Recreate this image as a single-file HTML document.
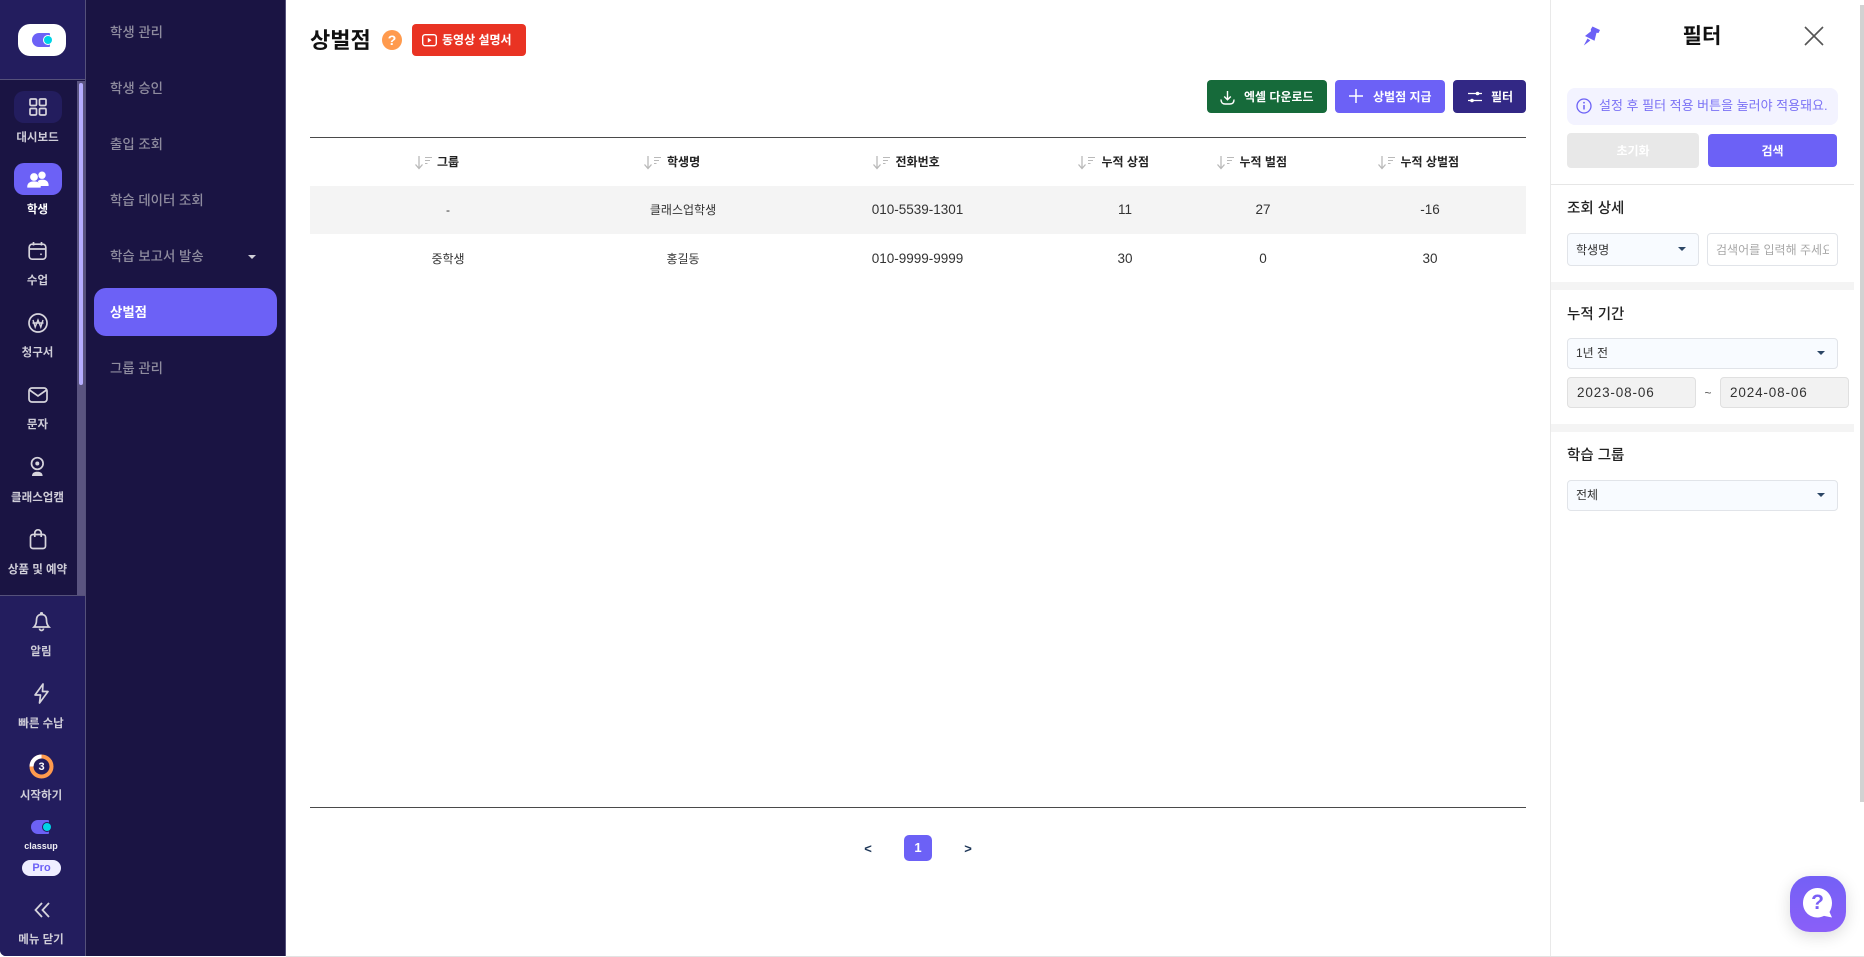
<!DOCTYPE html>
<html lang="ko"><head><meta charset="utf-8"><title>상벌점</title>
<style>
*{box-sizing:border-box;margin:0;padding:0}
html,body{width:1864px;height:957px;overflow:hidden;background:#fff;font-family:"Liberation Sans","Noto Sans CJK KR",sans-serif;color:#222}
.a{position:absolute}
.t{position:absolute;white-space:nowrap;line-height:20px;height:20px}
.c{position:absolute;white-space:nowrap;line-height:20px;height:20px;text-align:center;transform:translateX(-50%)}
.lb{font-size:11.5px;font-weight:700;color:#cfcdd8}
.nv{font-size:13.4px;font-weight:500;color:#8f8c9f;left:110px}
.th{font-size:12px;font-weight:700;color:#222}
.td{font-size:12px;color:#333}
.num{font-size:13.5px;color:#333}
.btn{position:absolute;border-radius:4px}
.h{font-size:14.5px;font-weight:500;color:#222;left:1567px}
.sel{position:absolute;background:#f8fbff;border:1px solid #e1e4e9;border-radius:4px}
.car{position:absolute;width:0;height:0;border-left:4.5px solid transparent;border-right:4.5px solid transparent;border-top:4.5px solid #2c4766}
.date{position:absolute;background:#f2f2f2;border:1px solid #e0e0e0;border-radius:4px;width:129px;height:31px;font-size:13.5px;line-height:29px;padding-left:9px;color:#333;letter-spacing:.85px}
svg{position:absolute;overflow:visible}
</style></head><body>

<!-- rails -->
<div class="a" style="left:0;top:0;width:86px;height:956px;background:#1a1443;border-bottom-left-radius:6px"></div>
<div class="a" style="left:0;top:0;width:86px;height:80px;background:#231d5e;border-bottom:1px solid #55517a"></div>
<div class="a" style="left:0;top:595px;width:86px;height:361px;background:#231d5e;border-top:1px solid #55517a;border-bottom-left-radius:6px"></div>
<div class="a" style="left:85px;top:0;width:1px;height:956px;background:#55517a"></div>
<div class="a" style="left:86px;top:0;width:199px;height:956px;background:#1a1443"></div>
<div class="a" style="left:285px;top:0;width:1px;height:956px;background:#55517a"></div>
<div class="a" style="left:77px;top:81px;width:8px;height:514px;background:#5a5480"></div>
<div class="a" style="left:79px;top:83px;width:4px;height:302px;background:#b6aeff;border-radius:2px"></div>

<!-- logo -->
<div class="a" style="left:18px;top:24px;width:48px;height:32px;background:#fff;border-radius:12px"></div>
<div class="a" style="left:32px;top:33px;width:18px;height:14px;background:#6c61f6;border-radius:7px 1px 1px 7px"></div>
<div class="a" style="left:44px;top:36px;width:8px;height:8px;background:#00d3e6;border-radius:50%;box-shadow:0 0 0 1px #fff"></div>

<!-- dashboard -->
<div class="a" style="left:14px;top:91px;width:48px;height:32px;background:#231d5e;border-radius:10px"></div>
<svg style="left:29px;top:98px" width="18" height="18" fill="none" stroke="#d6d4dc" stroke-width="1.7"><rect x="1" y="1" width="6.5" height="6.5" rx="1.2"/><rect x="10.5" y="1" width="6.5" height="6.5" rx="1.2"/><rect x="1" y="10.5" width="6.5" height="6.5" rx="1.2"/><rect x="10.5" y="10.5" width="6.5" height="6.5" rx="1.2"/></svg>
<div class="c lb" style="left:37.5px;top:128px">대시보드</div>

<!-- student -->
<div class="a" style="left:14px;top:163px;width:48px;height:32px;background:#6c61f6;border-radius:10px"></div>
<svg style="left:27px;top:171px" width="22" height="17" fill="#fff"><circle cx="15" cy="4.2" r="3.7"/><path d="M10 15h11.6c.4-3.4-1.6-6.4-6.2-6.4-2 0-3.6.6-4.6 1.6 1 1.2 1.2 3 .8 4.8z" /><circle cx="7" cy="6" r="4.2" stroke="#6c61f6" stroke-width=".6"/><path d="M.3 16.6c-.5-3.8 2-6.2 6.7-6.2s7.2 2.4 6.7 6.2z"/></svg>
<div class="c lb" style="left:37.5px;top:200px;color:#fff">학생</div>

<!-- class -->
<svg style="left:28px;top:241px" width="19" height="20" fill="none" stroke="#d6d4dc" stroke-width="1.7"><rect x="1.2" y="3.2" width="16.6" height="15" rx="3"/><path d="M1.2 8h16.6M5.5 1v3.5M13.5 1v3.5"/><circle cx="13" cy="13.3" r=".9" fill="#d6d4dc" stroke="none"/></svg>
<div class="c lb" style="left:37.5px;top:271px">수업</div>

<!-- invoice -->
<svg style="left:28px;top:313px" width="20" height="20" fill="none" stroke="#d6d4dc" stroke-width="1.7"><circle cx="10" cy="10" r="9"/><path d="M5 7l2.2 7 2.8-7 2.8 7L15 7M4.5 10h11" stroke-width="1.4"/></svg>
<div class="c lb" style="left:37.5px;top:343px">청구서</div>

<!-- message -->
<svg style="left:28px;top:387px" width="20" height="16" fill="none" stroke="#d6d4dc" stroke-width="1.7"><rect x="1" y="1" width="18" height="14" rx="3"/><path d="M1.5 3l8.5 6 8.5-6"/></svg>
<div class="c lb" style="left:37.5px;top:415px">문자</div>

<!-- cam -->
<svg style="left:30px;top:457px" width="15" height="20" fill="none" stroke="#d6d4dc" stroke-width="1.7"><circle cx="7.3" cy="6.5" r="5.8"/><circle cx="7.3" cy="6.5" r="2" fill="#d6d4dc" stroke="none"/><path d="M2 19c0-3 2-4.3 5.3-4.3S12.600 16 12.600 19z" fill="#d6d4dc" stroke="none"/></svg>
<div class="c lb" style="left:37.5px;top:488px">클래스업캠</div>

<!-- shop -->
<svg style="left:29px;top:529px" width="18" height="21" fill="none" stroke="#d6d4dc" stroke-width="1.7"><rect x="1.5" y="5.500" width="15" height="14" rx="2.5"/><path d="M5.800 8V4a3.200 3.200 0 0 1 6.400 0v4"/></svg>
<div class="c lb" style="left:37.5px;top:560px">상품 및 예약</div>

<!-- bell -->
<svg style="left:33px;top:612px" width="17" height="21" fill="none" stroke="#d6d4dc" stroke-width="1.7"><path d="M8.500 2.500c-3.500 0-5 2.500-5 5.500 0 3.500-1 5.500-2.500 7h15c-1.500-1.500-2.500-3.500-2.500-7 0-3-1.500-5.500-5-5.500z"/><path d="M6.500 16.500a2 2 0 0 0 4 0"/><circle cx="8.500" cy="1.700" r=".8" fill="#d6d4dc"/></svg>
<div class="c lb" style="left:41px;top:642px">알림</div>

<!-- bolt -->
<svg style="left:33px;top:683px" width="17" height="21" fill="none" stroke="#d6d4dc" stroke-width="1.7" stroke-linejoin="round"><path d="M10 1L2 12h5.500L6.500 20 15 8.500H9.500z"/></svg>
<div class="c lb" style="left:41px;top:714px">빠른 수납</div>

<!-- start -->
<svg style="left:29px;top:754px" width="25" height="25" fill="none" stroke-width="4"><circle cx="12.500" cy="12.500" r="10" stroke="#ff9a4d"/><path d="M2.500 12.500A10 10 0 0 1 12.500 2.500" stroke="#fff"/></svg>
<div class="c" style="left:41.5px;top:757px;font-size:11px;font-weight:700;color:#fff">3</div>
<div class="c lb" style="left:41px;top:786px">시작하기</div>

<!-- classup -->
<div class="a" style="left:31px;top:820px;width:18px;height:14px;background:#6c61f6;border-radius:7px 1px 1px 7px"></div>
<div class="a" style="left:43px;top:823px;width:8px;height:8px;background:#00d3e6;border-radius:50%;box-shadow:0 0 0 1px #231d5e"></div>
<div class="c" style="left:41px;top:836px;font-size:9px;font-weight:700;color:#f0f0f5">classup</div>
<div class="a" style="left:22px;top:860px;width:39px;height:16px;background:#efeeff;border-radius:8px;text-align:center;font-size:11px;font-weight:700;line-height:16px;color:#6c61f6">Pro</div>
<svg style="left:34px;top:902px" width="16" height="16" fill="none" stroke="#d6d4dc" stroke-width="1.800"><path d="M8 1L1.500 8 8 15M15 1L8.500 8 15 15"/></svg>
<div class="c lb" style="left:41px;top:930px">메뉴 닫기</div>

<!-- subnav -->
<div class="t nv" style="top:23px">학생 관리</div>
<div class="t nv" style="top:79px">학생 승인</div>
<div class="t nv" style="top:135px">출입 조회</div>
<div class="t nv" style="top:191px">학습 데이터 조회</div>
<div class="t nv" style="top:247px">학습 보고서 발송</div>
<div class="car" style="left:248px;top:255px;border-top-color:#d0d0d8;border-left-width:4px;border-right-width:4px;border-top-width:4px"></div>
<div class="a" style="left:94px;top:288px;width:183px;height:48px;background:#6c61f6;border-radius:12px"></div>
<div class="t nv" style="top:303px;color:#fff;font-weight:700">상벌점</div>
<div class="t nv" style="top:359px">그룹 관리</div>

<!-- header -->
<div class="t" style="left:310px;top:31px;font-size:22px;font-weight:700;color:#111">상벌점</div>
<div class="a" style="left:382px;top:30px;width:20px;height:20px;border-radius:50%;background:#ff9a4d;color:#fff;text-align:center;font-size:14px;font-weight:700;line-height:20px">?</div>
<div class="btn" style="left:412px;top:24px;width:114px;height:32px;background:#e93323"></div>
<svg style="left:422px;top:34px" width="15" height="13" fill="none" stroke="#fff" stroke-width="1.400"><rect x=".7" y=".7" width="13.600" height="11" rx="2.500"/><path d="M5.800 3.800l3.700 2.400-3.700 2.400z" fill="#fff" stroke="none"/></svg>
<div class="t" style="left:442px;top:30px;font-size:12px;font-weight:700;color:#fff">동영상 설명서</div>

<!-- toolbar -->
<div class="btn" style="left:1207px;top:80px;width:120px;height:33px;background:#166a3a"></div>
<svg style="left:1220px;top:90px" width="15" height="15" fill="none" stroke="#fff" stroke-width="1.400"><path d="M7.500 1v8.500M4.200 6.500l3.300 3.300 3.300-3.300M1 9.500c0 3 1.500 4.500 4 4.500h5c2.500 0 4-1.500 4-4.500"/></svg>
<div class="t" style="left:1244px;top:87px;font-size:12px;font-weight:700;color:#fff">엑셀 다운로드</div>
<div class="btn" style="left:1335px;top:80px;width:110px;height:33px;background:#6c61f6"></div>
<svg style="left:1349px;top:89px" width="14" height="14" fill="none" stroke="#fff" stroke-width="1.500"><path d="M7 0v14M0 7h14"/></svg>
<div class="t" style="left:1373px;top:87px;font-size:12px;font-weight:700;color:#fff">상벌점 지급</div>
<div class="btn" style="left:1453px;top:80px;width:73px;height:33px;background:#322885"></div>
<svg style="left:1468px;top:91px" width="14" height="12" fill="none" stroke="#fff" stroke-width="1.300"><path d="M0 2.500h14M0 9.500h14"/><circle cx="9.500" cy="2.500" r="1.800" fill="#fff" stroke="none"/><circle cx="4" cy="9.500" r="1.800" fill="#fff" stroke="none"/></svg>
<div class="t" style="left:1491px;top:87px;font-size:12px;font-weight:700;color:#fff">필터</div>

<!-- table -->
<div class="a" style="left:310px;top:137px;width:1216px;height:1px;background:#4a4a4a"></div>
<div class="a" style="left:310px;top:186px;width:1216px;height:48px;background:#f4f4f4"></div>
<div class="a" style="left:310px;top:807px;width:1216px;height:1px;background:#4a4a4a"></div>

<svg width="0" height="0" style="position:absolute"><defs><g id="s" fill="none" stroke="#b9b9b9"><path d="M5 0v12M1.500 8.500L5 12.500l3.500-4" stroke-width="1.300"/><path d="M11 1.500h7M11 4.500h5M11 7.500h2.500" stroke-width="1"/></g></defs></svg>
<svg style="left:414px;top:156px" width="18" height="14"><use href="#s"/></svg>
<div class="t th" style="left:437px;top:152px">그룹</div>
<svg style="left:643px;top:156px" width="18" height="14"><use href="#s"/></svg>
<div class="t th" style="left:667px;top:152px">학생명</div>
<svg style="left:872px;top:156px" width="18" height="14"><use href="#s"/></svg>
<div class="t th" style="left:895.500px;top:152px">전화번호</div>
<svg style="left:1077px;top:156px" width="18" height="14"><use href="#s"/></svg>
<div class="t th" style="left:1101.500px;top:152px">누적 상점</div>
<svg style="left:1216px;top:156px" width="18" height="14"><use href="#s"/></svg>
<div class="t th" style="left:1239.500px;top:152px">누적 벌점</div>
<svg style="left:1377px;top:156px" width="18" height="14"><use href="#s"/></svg>
<div class="t th" style="left:1400.500px;top:152px">누적 상벌점</div>

<div class="c td" style="left:448px;top:200px">-</div>
<div class="c td" style="left:683px;top:200px">클래스업학생</div>
<div class="c num" style="left:917.500px;top:200px">010-5539-1301</div>
<div class="c num" style="left:1125px;top:200px">11</div>
<div class="c num" style="left:1263px;top:200px">27</div>
<div class="c num" style="left:1430px;top:200px">-16</div>
<div class="c td" style="left:448px;top:249px">중학생</div>
<div class="c td" style="left:683px;top:249px">홍길동</div>
<div class="c num" style="left:917.500px;top:249px">010-9999-9999</div>
<div class="c num" style="left:1125px;top:249px">30</div>
<div class="c num" style="left:1263px;top:249px">0</div>
<div class="c num" style="left:1430px;top:249px">30</div>

<!-- pagination -->
<div class="c" style="left:868px;top:839px;font-size:13px;font-weight:700;color:#1c3556">&lt;</div>
<div class="a" style="left:904px;top:835px;width:28px;height:26px;background:#6c61f6;border-radius:5px;color:#fff;text-align:center;font-size:13px;font-weight:700;line-height:26px">1</div>
<div class="c" style="left:968px;top:839px;font-size:13px;font-weight:700;color:#1c3556">&gt;</div>

<!-- filter panel -->
<div class="a" style="left:1550px;top:0;width:1px;height:956px;background:#e9e9e9"></div>
<div class="a" style="left:1860px;top:5px;width:4px;height:797px;background:#d2d2d2"></div>
<svg style="left:1583px;top:26px" width="18" height="20" fill="#6c61f6"><path d="M9.500 0.500L17 4l-1.500 3-2-.2-2 8L2 10l6-4.800-.2-2z"/><path d="M4.500 12.500L.8 19.500l6.500-5z"/></svg>
<div class="c" style="left:1702px;top:26px;font-size:21px;font-weight:700;color:#111;height:22px;line-height:22px">필터</div>
<svg style="left:1805px;top:27px" width="18" height="18" fill="none" stroke="#555" stroke-width="1.600"><path d="M0 0l18 18M18 0L0 18"/></svg>

<div class="a" style="left:1567px;top:88px;width:271px;height:37px;background:#f3f3ff;border-radius:8px"></div>
<svg style="left:1576px;top:98px" width="16" height="16" fill="none" stroke="#6c61f6" stroke-width="1.300"><circle cx="8" cy="8" r="7"/><path d="M8 7v4.500" stroke-width="1.500"/><circle cx="8" cy="4.700" r=".9" fill="#6c61f6" stroke="none"/></svg>
<div class="t" style="left:1599px;top:96px;font-size:13px;color:#7b72f5">설정 후 필터 적용 버튼을 눌러야 적용돼요.</div>

<div class="btn" style="left:1567px;top:133px;width:132px;height:35px;background:#e8e8e8;color:#fff;text-align:center;font-size:12px;font-weight:700;line-height:37px">초기화</div>
<div class="btn" style="left:1708px;top:134px;width:129px;height:33px;background:#6c61f6;color:#fff;text-align:center;font-size:12px;font-weight:700;line-height:35px">검색</div>
<div class="a" style="left:1551px;top:184px;width:303px;height:1px;background:#e6e6e6"></div>

<div class="t h" style="top:199px">조회 상세</div>
<div class="sel" style="left:1567px;top:233px;width:132px;height:33px"></div>
<div class="t" style="left:1576px;top:240px;font-size:12px;color:#333">학생명</div>
<div class="car" style="left:1678px;top:247px"></div>
<div class="a" style="left:1707px;top:233px;width:131px;height:33px;background:#fff;border:1px solid #e1e4e9;border-radius:4px;overflow:hidden"><div style="position:absolute;left:8px;top:6px;width:113px;overflow:hidden;white-space:nowrap;font-size:12px;line-height:20px;color:#a8a8a8">검색어를 입력해 주세요</div></div>

<div class="a" style="left:1551px;top:282px;width:303px;height:8px;background:#f4f4f4"></div>
<div class="t h" style="top:305px">누적 기간</div>
<div class="sel" style="left:1567px;top:338px;width:271px;height:31px"></div>
<div class="t" style="left:1576px;top:343px;font-size:12px;color:#333">1년 전</div>
<div class="car" style="left:1817px;top:351px"></div>
<div class="date" style="left:1567px;top:377px">2023-08-06</div>
<div class="c" style="left:1708px;top:383px;font-size:12px;color:#555">~</div>
<div class="date" style="left:1720px;top:377px">2024-08-06</div>

<div class="a" style="left:1551px;top:424px;width:303px;height:8px;background:#f4f4f4"></div>
<div class="t h" style="top:446px">학습 그룹</div>
<div class="sel" style="left:1567px;top:480px;width:271px;height:31px"></div>
<div class="t" style="left:1576px;top:485px;font-size:12px;color:#333">전체</div>
<div class="car" style="left:1817px;top:493px"></div>

<!-- help chat -->
<div class="a" style="left:1790px;top:876px;width:56px;height:56px;border-radius:20px;background:linear-gradient(180deg,#7460f6,#8a5ff8);box-shadow:0 4px 16px rgba(0,0,0,.14)"></div>
<svg style="left:1803px;top:888px" width="30" height="30"><path d="M14.500 0C6.500 0 0 6.500 0 15s6.500 14.500 14.500 14.500c2.500 0 4.500-.6 6.500-1.600l8 1.600-2.500-5.500C28 21.500 29 18 29 15 29 6.500 22.500 0 14.500 0z" fill="#fff"/></svg>
<div class="c" style="left:1817.500px;top:893px;font-size:21px;font-weight:700;color:#7a5ff6">?</div>

<div class="a" style="left:286px;top:956px;width:1578px;height:1px;background:#e3e3e3"></div>
</body></html>
